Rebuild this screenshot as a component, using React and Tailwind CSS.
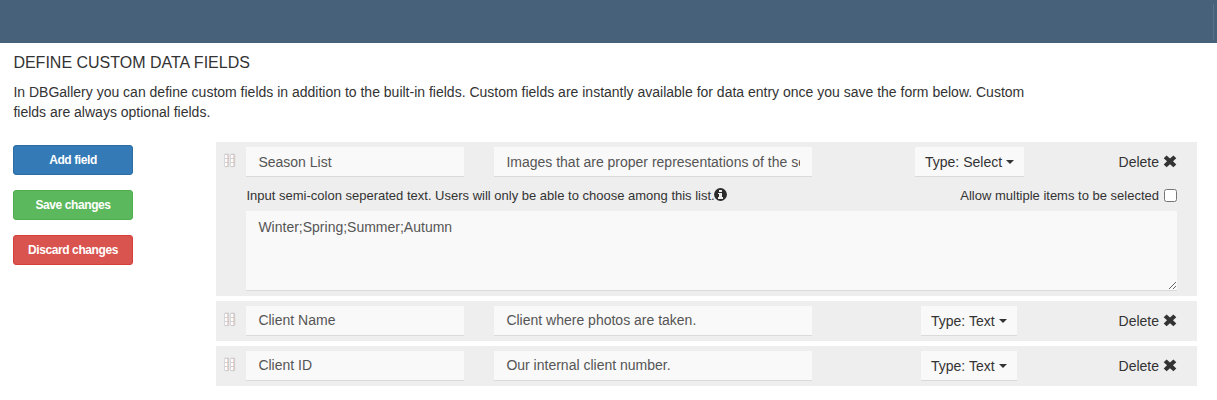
import React from "react";

const fields = [
  {
    name: "Season List",
    description: "Images that are proper representations of the season.",
    type: "Select",
    options: "Winter;Spring;Summer;Autumn",
  },
  { name: "Client Name", description: "Client where photos are taken.", type: "Text" },
  { name: "Client ID", description: "Our internal client number.", type: "Text" },
];

const control = "h-[30px] border-b border-[#dadada] bg-[#f9f9f9]";

function Grip() {
  return (
    <svg className="mt-[10px] ml-[7px] h-4 w-[14px] shrink-0" viewBox="0 0 14 16">
      {[2, 8].map((x) => (
        <g key={x}>
          <rect x={x - 1} y="1" width="5.5" height="14.5" rx="2" fill="#e2e2e3" />
          <rect x={x - 0.5} y="2" width="4.5" height="13" rx="1" fill="#cdcdd2" />
          {[3, 7, 11].map((y) => (
            <g key={y}>
              <rect x={x} y={y} width="2" height="3" fill="#fff" />
              <rect x={x + 2} y={y} width="1" height="3" fill="#f3d3c3" />
            </g>
          ))}
        </g>
      ))}
    </svg>
  );
}

function CrossIcon() {
  return (
    <svg className="mt-[6px] ml-[4px] h-[13px] w-[14px]" viewBox="0 0 14 13" fill="#333">
      <path d="M3.6 0.4 7 3.4 10.4 0.4 13.3 3.2 10 6.3 13.3 9.4 10.4 12.2 7 9.2 3.6 12.2 0.7 9.4 4 6.3 0.7 3.2Z" />
    </svg>
  );
}

function InfoIcon() {
  return (
    <svg className="mt-[2px] ml-[-0.5px] h-[13px] w-[13px]" viewBox="0 0 13 13">
      <circle cx="6.5" cy="6.5" r="6.4" fill="#2b2b2b" />
      <path d="M5 2h3v2H5ZM4 5h4v4h1v2H4V9h1V6H4Z" fill="#eee" />
    </svg>
  );
}

function FieldRow({ field }) {
  const inputPadding = field.options ? "" : "pb-[2px]";
  const typeButton = field.type === "Select" ? "ml-[103px] w-[109px]" : "ml-[109px] w-[96px]";
  return (
    <div className="flex bg-[#eee] pb-[5px]">
      <Grip />
      <div className="ml-[9px] w-[931px] pt-[5px]">
        <div className="flex">
          <input className={`${control} ${inputPadding} w-[218px] pr-3 pl-[12.4px] text-[#555] outline-none`} defaultValue={field.name} />
          <input className={`${control} ${inputPadding} ml-[30px] w-[318px] pr-3 pl-[12.4px] text-[#555] outline-none`} defaultValue={field.description} />
          <button className={`${control} ${typeButton} flex items-center pt-px pl-[10px] whitespace-nowrap`}>
            Type: {field.type}
            <svg className="ml-1 h-1 w-2 shrink-0" viewBox="0 0 8 4" fill="#333">
              <path d="M0 0h8L4 4Z" />
            </svg>
          </button>
          <button className="ml-auto flex h-[30px]">
            <span className="leading-[31px]">Delete</span>
            <span className="pt-[2px]"><CrossIcon /></span>
          </button>
        </div>
        {field.options && (
          <>
            <div className="flex h-[34px] justify-between pt-[9px] text-[13px] leading-[19px]">
              <div className="flex pl-[0.5px]">
                <span>Input semi-colon seperated text. Users will only be able to choose among this list.</span>
                <InfoIcon />
              </div>
              <label className="flex">
                Allow multiple items to be selected
                <input type="checkbox" className="mt-[3px] ml-[5px] h-[13px] w-[13px]" />
              </label>
            </div>
            <textarea
              className="block h-20 w-full resize border-b border-[#dadada] bg-[#f9f9f9] px-[12.4px] py-[6px] leading-5 text-[#555] outline-none"
              defaultValue={field.options}
            />
          </>
        )}
      </div>
    </div>
  );
}

const action = "h-[30px] w-[120px] rounded-[3px] border text-[12px] font-bold tracking-[-0.4px] text-white";

export default function App() {
  return (
    <div className="h-[400px] overflow-hidden bg-white font-['Liberation_Sans',Arial,sans-serif] text-[14px] leading-5 text-[#333]">
      <header className="flex h-[43px] justify-end bg-[#48617a] pt-1 pr-[3px]">
        <div className="h-9 w-px bg-[#5a7189]" />
      </header>
      <main className="pl-[13px]">
        <h1 className="pt-[10px] pl-[0.4px] text-[16px] leading-5">DEFINE CUSTOM DATA FIELDS</h1>
        <p className="mt-[9px] w-[1030px] pl-[0.4px]">
          In DBGallery you can define custom fields in addition to the built-in fields. Custom fields are instantly
          available for data entry once you save the form below. Custom fields are always optional fields.
        </p>
        <div className="mt-5 flex">
          <div className="flex w-[203px] flex-col gap-[15px] pt-[3px]">
            <button className={`${action} border-[#2e6da4] bg-[#337ab7]`}>Add field</button>
            <button className={`${action} border-[#4cae4c] bg-[#5cb85c]`}>Save changes</button>
            <button className={`${action} border-[#d43f3a] bg-[#d9534f]`}>Discard changes</button>
          </div>
          <div className="flex w-[981px] flex-col gap-[5px]">
            {fields.map((field) => (
              <FieldRow key={field.name} field={field} />
            ))}
          </div>
        </div>
      </main>
    </div>
  );
}
